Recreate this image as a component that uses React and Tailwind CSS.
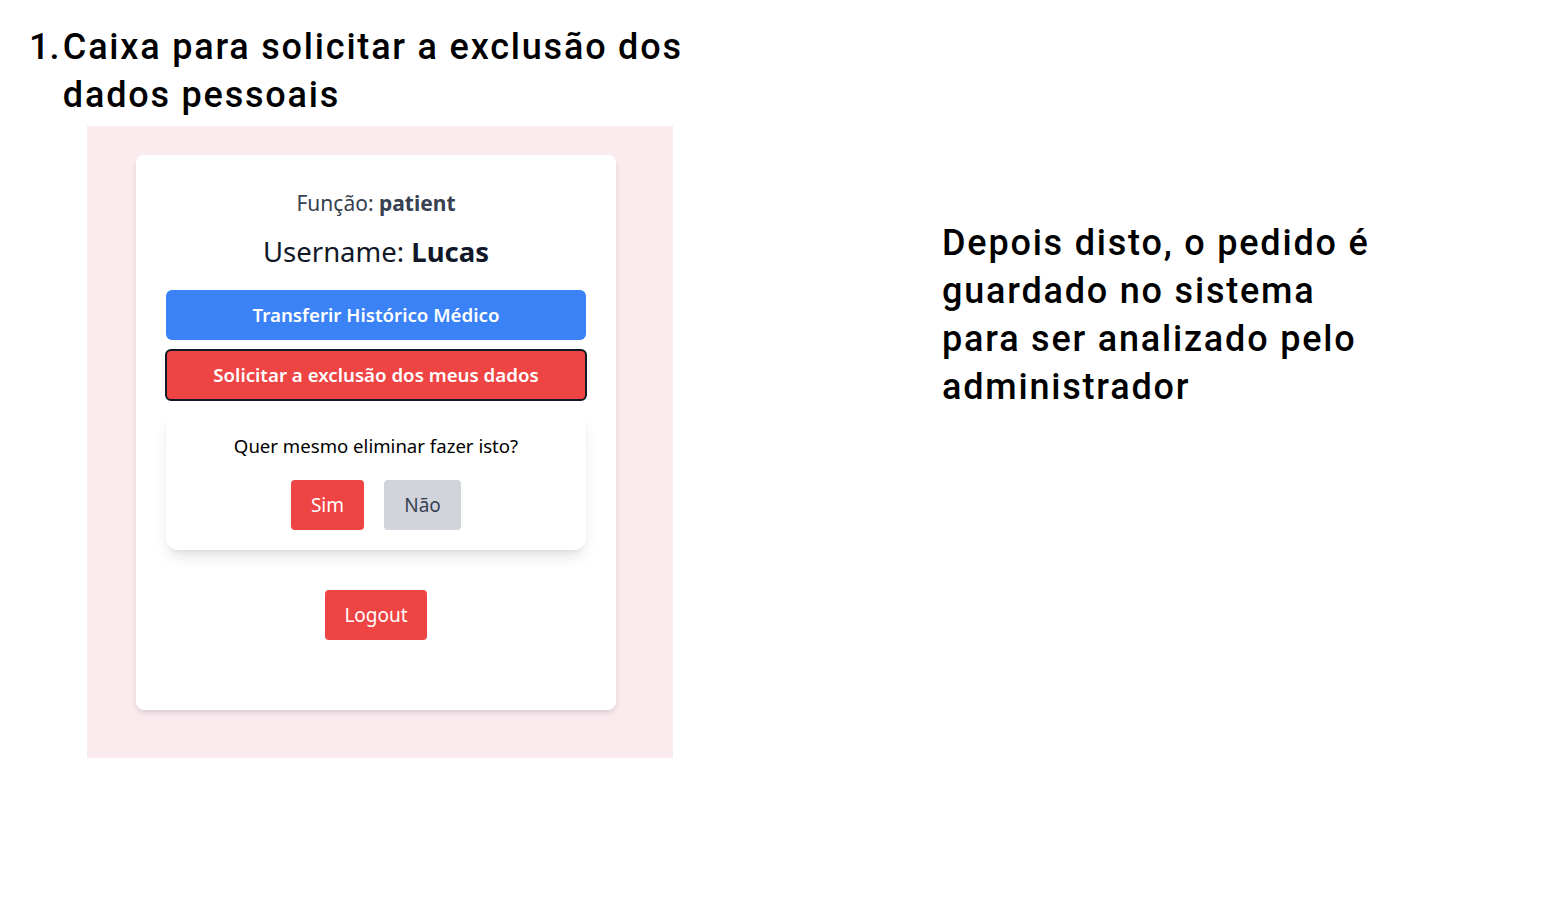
import { useState } from "react";

const Perfil = () => {
  const [confirmar, setConfirmar] = useState(true);

  return (
    <div className="ml-[87px] mt-[7px] w-[586px] h-[632px] bg-[#faebef] pt-[29px] pl-[49px]">
      <div className="w-[480px] h-[555px] bg-white rounded-lg shadow-md flex flex-col items-center pt-[32px] px-[30px] font-['Noto_Sans',sans-serif]">
        <p className="text-[21px] leading-[32px] text-[#374151]">
          Função: <span className="font-bold">patient</span>
        </p>
        <p className="mt-[17px] text-[27.5px] leading-[32px] text-[#111827]">
          Username: <span className="font-bold">Lucas</span>
        </p>
        <button
          type="button"
          className="mt-[22px] w-full h-[50px] rounded-md bg-[#3b82f6] text-white text-[18.7px] font-semibold"
        >
          Transferir Histórico Médico
        </button>
        <button
          type="button"
          className="mt-[9px] w-[422px] h-[52px] rounded-md bg-[#ef4444] border-2 border-[#111827] text-white text-[18.7px] font-semibold"
          onClick={() => setConfirmar(true)}
        >
          Solicitar a exclusão dos meus dados
        </button>
        {confirmar && (
          <div className="mt-[9px] w-full h-[140px] bg-white rounded-xl shadow-lg flex flex-col items-center pt-[24px]">
            <p className="text-[18.6px] leading-[24px] text-black">Quer mesmo eliminar fazer isto?</p>
            <div className="mt-[22px] flex gap-5">
              <button type="button" className="w-[73px] h-[50px] rounded bg-[#ef4444] text-white text-[19px]">
                Sim
              </button>
              <button
                type="button"
                className="w-[77px] h-[50px] rounded bg-[#d1d5db] text-[#374151] text-[19px]"
                onClick={() => setConfirmar(false)}
              >
                Não
              </button>
            </div>
          </div>
        )}
        <button type="button" className="mt-[40px] w-[102px] h-[50px] rounded bg-[#ef4444] text-white text-[19px]">
          Logout
        </button>
      </div>
    </div>
  );
};

export default function App() {
  return (
    <div className="w-[1560px] h-[924px] bg-white flex text-black font-['Roboto',sans-serif]">
      <div className="w-[720px] pt-[23px]">
        <div className="flex text-[36px] leading-[48px] font-medium">
          <span className="w-[63px] pl-[29px] tracking-normal">1.</span>
          <span className="w-[660px] tracking-[1.8px]">Caixa para solicitar a exclusão dos dados pessoais</span>
        </div>
        <Perfil />
      </div>
      <div className="ml-[222px] pt-[219px] w-[440px] text-[36px] leading-[48px] tracking-[1.8px] font-medium">
        Depois disto, o pedido é guardado no sistema para ser analizado pelo administrador
      </div>
    </div>
  );
}
